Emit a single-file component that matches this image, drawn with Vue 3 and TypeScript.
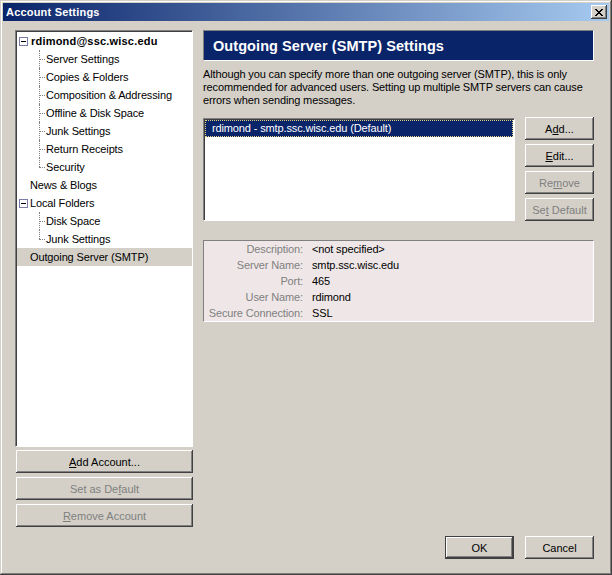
<template>
  <div class="window">
    <div class="titlebar">
      <span class="title">Account Settings</span>
      <button class="close" aria-label="Close">
        <svg width="8" height="7" viewBox="0 0 8 7">
          <path d="M0 0h2v1h1v1h2V1h1V0h2v1H7v1H6v1H5v1h1v1h1v1h1v1H6V6H5V5H3v1H2v1H0V6h1V5h1V4h1V3H2V2H1V1H0z" fill="#000" />
        </svg>
      </button>
    </div>

    <div class="body">
      <div class="main">
        <aside class="left">
          <div class="tree">
            <template v-for="row in treeRows" :key="row.label + row.kind">
              <div class="row" :class="[row.kind, { selected: row.selected, last: row.last }]">
                <span v-if="row.expander" class="expander"></span>
                <span>{{ row.label }}</span>
              </div>
            </template>
          </div>
          <div class="left-buttons">
            <button class="btn wide"><u>A</u>dd Account...</button>
            <button class="btn wide" disabled>Set as De<u>f</u>ault</button>
            <button class="btn wide" disabled><u>R</u>emove Account</button>
          </div>
        </aside>

        <section class="right">
          <h1 class="header">Outgoing Server (SMTP) Settings</h1>
          <p class="desc">
            Although you can specify more than one outgoing server (SMTP), this is only<br />
            recommended for advanced users. Setting up multiple SMTP servers can cause<br />
            errors when sending messages.
          </p>

          <div class="servers">
            <div class="listbox">
              <div class="list-item">rdimond - smtp.ssc.wisc.edu (Default)</div>
            </div>
            <div class="server-buttons">
              <button class="btn">A<u>d</u>d...</button>
              <button class="btn"><u>E</u>dit...</button>
              <button class="btn" disabled>Re<u>m</u>ove</button>
              <button class="btn" disabled>Se<u>t</u> Default</button>
            </div>
          </div>

          <dl class="details">
            <template v-for="d in details" :key="d.label">
              <dt>{{ d.label }}:</dt>
              <dd>{{ d.value }}</dd>
            </template>
          </dl>
        </section>
      </div>

      <div class="footer">
        <button class="btn default">OK</button>
        <button class="btn">Cancel</button>
      </div>
    </div>
  </div>
</template>

<script setup lang="ts">
interface TreeRow {
  label: string
  kind: 'account' | 'child' | 'top'
  expander?: boolean
  selected?: boolean
  last?: boolean
}

const treeRows: TreeRow[] = [
  { label: 'rdimond@ssc.wisc.edu', kind: 'account', expander: true },
  { label: 'Server Settings', kind: 'child' },
  { label: 'Copies & Folders', kind: 'child' },
  { label: 'Composition & Addressing', kind: 'child' },
  { label: 'Offline & Disk Space', kind: 'child' },
  { label: 'Junk Settings', kind: 'child' },
  { label: 'Return Receipts', kind: 'child' },
  { label: 'Security', kind: 'child', last: true },
  { label: 'News & Blogs', kind: 'top' },
  { label: 'Local Folders', kind: 'top', expander: true },
  { label: 'Disk Space', kind: 'child' },
  { label: 'Junk Settings', kind: 'child', last: true },
  { label: 'Outgoing Server (SMTP)', kind: 'top', selected: true },
]

const details = [
  { label: 'Description', value: '<not specified>' },
  { label: 'Server Name', value: 'smtp.ssc.wisc.edu' },
  { label: 'Port', value: '465' },
  { label: 'User Name', value: 'rdimond' },
  { label: 'Secure Connection', value: 'SSL' },
]
</script>

<style scoped>
.window {
  width: 612px;
  height: 575px;
  box-sizing: border-box;
  padding: 3px;
  display: flex;
  flex-direction: column;
  background: #d4d0c8;
  font-family: "Liberation Sans", Arial, sans-serif;
  font-size: 11px;
  letter-spacing: -0.13px;
  color: #000;
  box-shadow: inset -1px -1px 0 #404040, inset 1px 1px 0 #d4d0c8, inset -2px -2px 0 #808080, inset 2px 2px 0 #fff;
}

.titlebar {
  height: 18px;
  flex-shrink: 0;
  display: flex;
  align-items: center;
  justify-content: space-between;
  padding: 0 2px;
  background: linear-gradient(90deg, #0a246a, #a6caf0);
}

.title {
  color: #fff;
  font-weight: 700;
  font-size: 11px;
  letter-spacing: 0.2px;
  padding-left: 1px;
}

.close {
  width: 16px;
  height: 14px;
  padding: 0;
  display: flex;
  align-items: center;
  justify-content: center;
  background: #d4d0c8;
  border: none;
  box-shadow: inset -1px -1px 0 #404040, inset 1px 1px 0 #fff, inset -2px -2px 0 #808080;
}

.body {
  flex: 1;
  display: flex;
  flex-direction: column;
  padding: 9px 15px 13px 12px;
  min-height: 0;
}

.main {
  flex: 1;
  display: flex;
  gap: 10px;
  min-height: 0;
}

.left {
  width: 178px;
  display: flex;
  flex-direction: column;
  gap: 3px;
}

.tree {
  height: 417px;
  box-sizing: border-box;
  padding: 1px 0 0;
  background: #fff;
  border: 1px solid;
  border-color: #808080 #fff #fff #808080;
  box-shadow: inset 1px 1px 0 #404040;
}

.row {
  position: relative;
  height: 18px;
  display: flex;
  align-items: center;
  white-space: nowrap;
  padding-left: 13px;
  margin-left: 1px;
}

.account {
  font-weight: 700;
  letter-spacing: 0.2px;
  padding-left: 14px;
}

.child {
  padding-left: 29px;
}

.child::before {
  content: "";
  position: absolute;
  left: 22px;
  top: 0;
  bottom: 0;
  border-left: 1px dotted #808080;
}

.child::after {
  content: "";
  position: absolute;
  left: 22px;
  width: 6px;
  top: 9px;
  border-top: 1px dotted #808080;
}

.child.last::before {
  bottom: 9px;
}

.selected {
  background: #d4d0c8;
}

.expander {
  position: absolute;
  left: 2px;
  top: 5px;
  width: 7px;
  height: 7px;
  border: 1px solid #7b7ba8;
  background: linear-gradient(#fff 3px, #000 3px, #000 4px, #fff 4px) 1px 0 / 5px 100% no-repeat, #fff;
}

.left-buttons {
  display: flex;
  flex-direction: column;
  gap: 4px;
}

.btn {
  width: 69px;
  height: 23px;
  padding: 0;
  font: inherit;
  letter-spacing: 0;
  color: #000;
  background: #d4d0c8;
  border: none;
  box-shadow: inset -1px -1px 0 #404040, inset 1px 1px 0 #fff, inset -2px -2px 0 #808080;
}

.btn.wide {
  width: 177px;
  margin-left: 1px;
}

.btn:disabled {
  color: #808080;
}

.btn.default {
  outline: 1px solid #404040;
  outline-offset: -1px;
  box-shadow: inset -2px -2px 0 #404040, inset 2px 2px 0 #fff, inset -3px -3px 0 #808080;
}

.right {
  flex: 1;
  display: flex;
  flex-direction: column;
  min-width: 0;
}

.header {
  margin: 0;
  height: 31px;
  box-sizing: border-box;
  display: flex;
  align-items: center;
  padding-left: 9px;
  background: #0a246a;
  color: #fff;
  font-size: 14.5px;
  letter-spacing: 0.07px;
  font-weight: 700;
  border: 1px solid;
  border-color: #808080 #fff #fff #808080;
}

.desc {
  margin: 7px 0 0;
  line-height: 13px;
  white-space: nowrap;
}

.servers {
  display: flex;
  justify-content: space-between;
  margin-top: 10px;
}

.listbox {
  width: 312px;
  height: 103px;
  margin-top: 1px;
  box-sizing: border-box;
  padding: 1px;
  background: #fff;
  border: 1px solid;
  border-color: #808080 #fff #fff #808080;
  box-shadow: inset 1px 1px 0 #404040;
}

.list-item {
  height: 17px;
  line-height: 15px;
  box-sizing: border-box;
  padding-left: 6px;
  color: #fff;
  background: #0a246a;
  border: 1px dotted #e0d27a;
}

.server-buttons {
  display: flex;
  flex-direction: column;
  gap: 4px;
}

.details {
  margin: 19px 0 0;
  height: 82px;
  box-sizing: border-box;
  padding: 0;
  display: grid;
  grid-template-columns: 99px 1fr;
  grid-auto-rows: 16px;
  column-gap: 9px;
  align-items: center;
  background: #efe7e7;
  border: 1px solid;
  border-color: #808080 #fff #fff #808080;
}

.details dt {
  text-align: right;
  color: #808080;
  white-space: nowrap;
}

.details dd {
  margin: 0;
}

.footer {
  flex-shrink: 0;
  display: flex;
  justify-content: flex-end;
  gap: 11px;
}
</style>
